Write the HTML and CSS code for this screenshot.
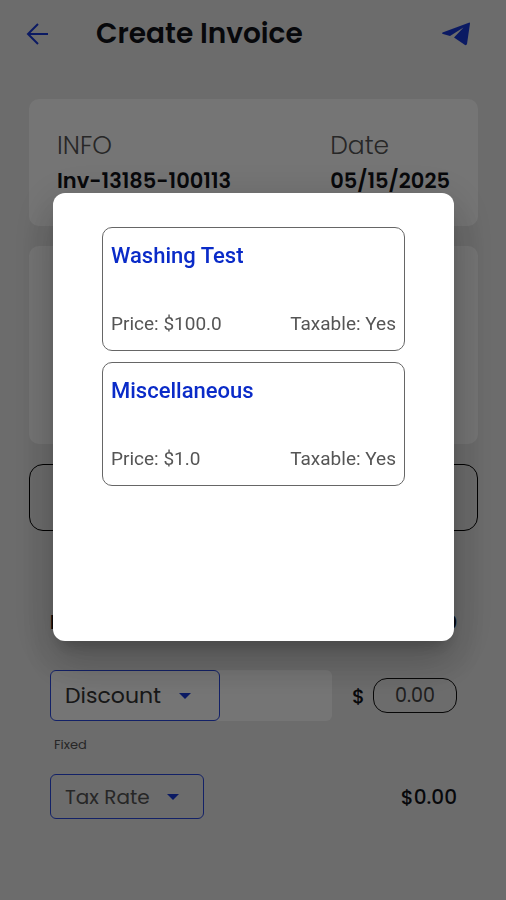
FILE: index.html
```html
<!DOCTYPE html>
<html lang="en">
<head>
    <title>Create Invoice</title>
    <meta charset="UTF-8">
    <meta name="viewport" content="width=device-width, initial-scale=1.0">
    <link rel="stylesheet" href="styles.css">
</head>
<body>
    <header class="topbar">
        <button type="button" class="icon-btn" aria-label="Back">
            <svg width="22" height="22" viewBox="0 0 22 22" fill="none" stroke="currentColor" stroke-width="2">
                <path d="M22 11H2M12 1L2 11l10 10"/>
            </svg>
        </button>
        <h1>Create Invoice</h1>
        <button type="button" class="icon-btn" aria-label="Send">
            <svg width="28" height="24" viewBox="0 0 28 24" fill="currentColor">
                <path d="M27.500 0.500L0.500 10.500Q-0.500 11.500 1 12L8 14L21.500 5.500L12 15.500L23 23Q24.500 23.500 25 22L28 1.500Q28 0.500 27.500 0.500Z"/>
            </svg>
        </button>
    </header>

    <main>
        <section class="card info">
            <div>
                <div class="caption">INFO</div>
                <div class="value">Inv-13185-100113</div>
            </div>
            <div>
                <div class="caption">Date</div>
                <div class="value">05/15/2025</div>
            </div>
        </section>

        <section class="card customer"></section>

        <button type="button" class="add-item" aria-label="Add item"></button>

        <section class="totals">
            <div class="row items">
                <span>Items</span>
                <span>$0.00</span>
            </div>
            <div class="row">
                <div class="discount">
                    <div class="dropdown">
                        <select id="discount" aria-label="Discount">
                            <option>Discount</option>
                        </select>
                        <svg width="12" height="6" viewBox="0 0 12 6" fill="currentColor"><path d="M0 0h12L6 6z"/></svg>
                    </div>
                </div>
                <label class="amount">$ <input type="text" value="0.00"></label>
            </div>
            <div class="hint">Fixed</div>
            <div class="row">
                <div class="dropdown small">
                    <select id="taxRate" aria-label="Tax Rate">
                        <option>Tax Rate</option>
                    </select>
                    <svg width="12" height="6" viewBox="0 0 12 6" fill="currentColor"><path d="M0 0h12L6 6z"/></svg>
                </div>
                <span>$0.00</span>
            </div>
        </section>
    </main>

    <!-- Item picker -->
    <div class="overlay">
        <div class="modal" role="dialog" aria-label="Select item">
            <button type="button" class="service">
                <span class="name">Washing Test</span>
                <span class="details">
                    <span>Price: $100.0</span>
                    <span>Taxable: Yes</span>
                </span>
            </button>
            <button type="button" class="service">
                <span class="name">Miscellaneous</span>
                <span class="details">
                    <span>Price: $1.0</span>
                    <span>Taxable: Yes</span>
                </span>
            </button>
        </div>
    </div>
</body>
</html>
```
FILE: styles.css
```css
* {
    box-sizing: border-box;
}
body {
    margin: 0;
    min-height: 100vh;
    font-family: Poppins, Inter, sans-serif;
    background-color: #ebebeb;
    color: #111218;
}
button, input, select {
    font: inherit;
    color: inherit;
    background: none;
    border: none;
    padding: 0;
    margin: 0;
}
button {
    cursor: pointer;
}
svg {
    display: block;
}
.topbar {
    display: flex;
    align-items: center;
    height: 68px;
    padding: 0 36px 0 26px;
}
.topbar h1 {
    flex: 1;
    margin: 0 0 0 48px;
    font-size: 28px;
    line-height: 40px;
    font-weight: 600;
}
.icon-btn {
    color: #1a3ad8;
}
main {
    padding: 31px 28px 31px 29px;
}
.card {
    background-color: #fff;
    border-radius: 10px;
    margin-bottom: 20px;
}
.info {
    display: flex;
    justify-content: space-between;
    height: 127px;
    padding: 29px 28px;
}
.caption {
    font-size: 25px;
    line-height: 36px;
    font-weight: 300;
    color: #555;
}
.value {
    font-size: 21px;
    line-height: 34px;
    font-weight: 600;
}
.customer {
    height: 198px;
}
.add-item {
    display: block;
    width: 100%;
    height: 67px;
    border: 1px solid #000;
    border-radius: 14px;
}
.totals {
    padding: 73px 21px 0;
    font-size: 20px;
    font-weight: 500;
}
.row {
    display: flex;
    align-items: center;
    justify-content: space-between;
}
.items {
    height: 36px;
    margin-bottom: 30px;
    font-weight: 700;
}
.discount {
    width: 282px;
    background-color: #fff;
    border-radius: 6px;
}
.dropdown {
    display: flex;
    align-items: center;
    gap: 17px;
    width: 170px;
    height: 51px;
    padding-left: 14px;
    border: 1px solid #2a48e0;
    border-radius: 6px;
    font-size: 22px;
    font-weight: 400;
    color: #333;
}
.dropdown select {
    appearance: none;
}
.dropdown svg {
    color: #1a3ad8;
}
.dropdown.small {
    width: 154px;
    height: 45px;
    font-size: 20px;
    color: #555;
}
.amount {
    display: flex;
    align-items: center;
    gap: 8px;
}
.amount input {
    width: 84px;
    height: 35px;
    border: 1px solid #111;
    border-radius: 14px;
    text-align: center;
    font-size: 19px;
    font-weight: 400;
    color: #444;
}
.hint {
    margin: 14px 4px 20px;
    font-size: 13px;
    line-height: 19px;
    font-weight: 400;
    color: #555;
}
.overlay {
    position: fixed;
    inset: 0;
    display: flex;
    align-items: center;
    justify-content: center;
    padding: 0 52px 66px 53px;
    background-color: rgba(0, 0, 0, 0.54);
}
.modal {
    display: flex;
    flex-direction: column;
    gap: 11px;
    width: 100%;
    min-height: 448px;
    padding: 34px 49px;
    background-color: #fff;
    border-radius: 12px;
    box-shadow: 0 11px 15px -7px rgba(0, 0, 0, 0.2), 0 24px 38px 3px rgba(0, 0, 0, 0.14), 0 9px 46px 8px rgba(0, 0, 0, 0.12);
    font-family: Roboto, sans-serif;
}
.service {
    display: flex;
    flex-direction: column;
    justify-content: space-between;
    height: 124px;
    padding: 14px 8px;
    border: 1px solid #666;
    border-radius: 10px;
    text-align: left;
}
.name {
    font-size: 22px;
    line-height: 28px;
    font-weight: 500;
    color: #0a2bc8;
}
.details {
    display: flex;
    justify-content: space-between;
    width: 100%;
    font-size: 19px;
    line-height: 24px;
    color: #555;
}
```
